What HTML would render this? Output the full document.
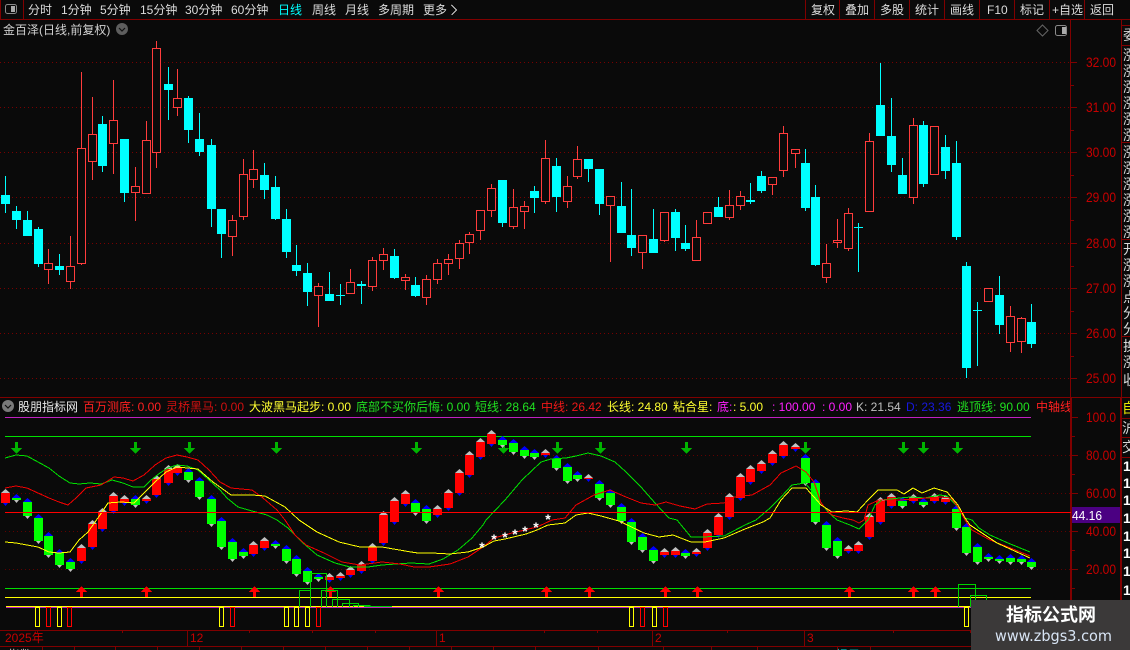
<!DOCTYPE html>
<html><head><meta charset="utf-8"><style>
html,body{margin:0;padding:0;background:#0a0a0a;width:1130px;height:650px;overflow:hidden}
svg{display:block}
text{font-family:"Liberation Sans","WenQuanYi Zen Hei","Noto Sans CJK SC",sans-serif;font-size:12px}
</style></head><body>
<svg width="1130" height="650" viewBox="0 0 1130 650" shape-rendering="crispEdges">
<rect width="1130" height="650" fill="#0a0a0a"/>
<!-- grid -->
<path d="M0 62.5H1070M0 107.5H1070M0 152.5H1070M0 197.5H1070M0 243.5H1070M0 288.5H1070M0 333.5H1070M0 378.5H1070" stroke="#780000" stroke-dasharray="1 3" fill="none"/>
<path d="M5 455.5H1070M5 493.5H1070M5 531.5H1070M5 569.5H1070" stroke="#600000" stroke-dasharray="1 3" fill="none"/>
<!-- cyan candles -->
<path stroke="#00ffff" fill="none" d="M5.5 176V213M16.5 206V229M27.5 211V236M38.5 227V267M59.5 254V275M102.5 116V172M124.5 139V202M168.5 67V120M188.5 96V143M199.5 113V156M211.5 139V227M221.5 209V258M264.5 163V199M275.5 176V220M286.5 209V258M296.5 245V276M307.5 263V306M329.5 272V301M340.5 284V305M361.5 281V304M394.5 249V279M415.5 277V297M502.5 180V227M534.5 186V213M556.5 158V212M588.5 159V182M599.5 169V215M621.5 182V233M631.5 189V256M653.5 209V253M675.5 209V251M685.5 225V251M718.5 197V217M750.5 183V204M761.5 171V193M805.5 149V211M815.5 185V266M858.5 223V272M880.5 63V136M891.5 98V172M902.5 158V194M923.5 121V187M945.5 135V179M956.5 141V240M966.5 262V378M977.5 302V366M999.5 276V334M1031.5 304V348"/>
<path fill="#00ffff" d="M1 195h9V204h-9zM12 211h9V220h-9zM23 220h9V236h-9zM34 229h9V264h-9zM55 266h9V270h-9zM98 124h9V166h-9zM120 139h9V193h-9zM164 84h9V90h-9zM184 98h9V130h-9zM195 139h9V152h-9zM207 145h9V209h-9zM217 209h9V234h-9zM260 175h9V190h-9zM271 187h9V219h-9zM282 219h9V252h-9zM292 265h9V271h-9zM303 273h9V292h-9zM325 294h9V301h-9zM336 295h9V296h-9zM357 284h9V286h-9zM390 256h9V278h-9zM411 285h9V296h-9zM498 180h9V223h-9zM530 191h9V198h-9zM552 166h9V197h-9zM584 159h9V169h-9zM595 169h9V204h-9zM617 206h9V233h-9zM627 235h9V248h-9zM649 239h9V253h-9zM671 212h9V238h-9zM681 243h9V249h-9zM714 207h9V217h-9zM746 200h9V202h-9zM757 176h9V191h-9zM801 163h9V208h-9zM811 197h9V265h-9zM854 227h9V228h-9zM876 105h9V136h-9zM887 136h9V165h-9zM898 175h9V194h-9zM919 125h9V184h-9zM941 147h9V171h-9zM952 163h9V237h-9zM962 266h9V368h-9zM973 310h9V311h-9zM995 295h9V325h-9zM1027 322h9V344h-9z"/>
<!-- red candles -->
<path stroke="#ff3c3c" fill="none" d="M48.5 249V263M48.5 270V284M70.5 236V266M70.5 282V289M81.5 72V148M81.5 264V265M92.5 97V134M92.5 162V180M113.5 80V120M113.5 144V174M135.5 167V186M135.5 193V221M146.5 121V140M156.5 41V48M156.5 153V168M177.5 69V98M177.5 108V116M232.5 215V220M232.5 237V256M243.5 159V174M243.5 217V220M253.5 150V169M253.5 180V188M318.5 283V286M318.5 296V327M350.5 269V282M372.5 257V260M372.5 287V291M383.5 248V254M383.5 261V270M405.5 274V277M405.5 281V290M426.5 275V279M426.5 298V305M437.5 259V263M437.5 280V284M448.5 254V259M448.5 264V275M459.5 240V243M459.5 259V269M469.5 232V234M469.5 243V254M480.5 231V240M491.5 184V188M491.5 211V217M513.5 189V207M513.5 227V229M524.5 201V206M524.5 212V229M545.5 140V158M545.5 202V204M567.5 176V186M567.5 202V208M577.5 146V159M577.5 177V179M610.5 206V262M642.5 253V269M664.5 241V242M696.5 220V237M729.5 190V205M729.5 218V220M740.5 191V196M740.5 206V210M772.5 185V195M783.5 126V133M783.5 171V177M795.5 154V168M826.5 244V263M826.5 278V283M837.5 219V240M837.5 243V248M848.5 208V213M848.5 249V251M869.5 133V141M913.5 118V125M913.5 198V204M1010.5 306V316M1010.5 343V352M1021.5 317V318M1021.5 342V353"/>
<path stroke="#ff3c3c" fill="#0a0a0a" d="M44.5 263.5h8V269.5h-8zM66.5 266.5h8V281.5h-8zM77.5 148.5h8V263.5h-8zM88.5 134.5h8V161.5h-8zM109.5 120.5h8V143.5h-8zM131.5 186.5h8V192.5h-8zM142.5 140.5h8V193.5h-8zM152.5 48.5h8V152.5h-8zM173.5 98.5h8V107.5h-8zM228.5 220.5h8V236.5h-8zM239.5 174.5h8V216.5h-8zM249.5 169.5h8V179.5h-8zM314.5 286.5h8V295.5h-8zM346.5 282.5h8V293.5h-8zM368.5 260.5h8V286.5h-8zM379.5 254.5h8V260.5h-8zM401.5 277.5h8V280.5h-8zM422.5 279.5h8V297.5h-8zM433.5 263.5h8V279.5h-8zM444.5 259.5h8V263.5h-8zM455.5 243.5h8V258.5h-8zM465.5 234.5h8V242.5h-8zM476.5 210.5h8V230.5h-8zM487.5 188.5h8V210.5h-8zM509.5 207.5h8V226.5h-8zM520.5 206.5h8V211.5h-8zM541.5 158.5h8V201.5h-8zM563.5 186.5h8V201.5h-8zM573.5 159.5h8V176.5h-8zM606.5 196.5h8V205.5h-8zM638.5 235.5h8V252.5h-8zM660.5 212.5h8V240.5h-8zM692.5 237.5h8V260.5h-8zM703.5 212.5h8V223.5h-8zM725.5 205.5h8V217.5h-8zM736.5 196.5h8V205.5h-8zM768.5 177.5h8V184.5h-8zM779.5 133.5h8V170.5h-8zM791.5 149.5h8V153.5h-8zM822.5 263.5h8V277.5h-8zM833.5 240.5h8V242.5h-8zM844.5 213.5h8V248.5h-8zM865.5 141.5h8V211.5h-8zM909.5 125.5h8V197.5h-8zM930.5 126.5h8V174.5h-8zM984.5 288.5h8V301.5h-8zM1006.5 316.5h8V342.5h-8zM1017.5 318.5h8V341.5h-8z"/>
<!-- frame -->
<path stroke="#800000" fill="none" d="M0.5 0V19M0 19.5H1130M23.5 0V19M805.5 0V19M839.5 0V19M874.5 0V19M909.5 0V19M944.5 0V19M979.5 0V19M1014.5 0V19M1049.5 0V19M1084.5 0V19M0 397.5H1130M0 630.5H1122M0 646.5H1122"/>
<rect x="1070" y="20" width="1" height="377" fill="#800000"/>
<rect x="1070" y="397" width="2" height="233" fill="#800000"/>
<rect x="1121" y="20" width="1" height="377" fill="#800000"/>
<rect x="1120" y="397" width="2" height="253" fill="#800000"/>
<path stroke="#800000" fill="none" d="M1071 62.5h6M1071 85.5h3M1071 107.5h6M1071 130.5h3M1071 152.5h6M1071 175.5h3M1071 197.5h6M1071 220.5h3M1071 243.5h6M1071 266.5h3M1071 288.5h6M1071 311.5h3M1071 333.5h6M1071 356.5h3M1071 378.5h6M1072 417.5h6M1072 436.5h3M1072 455.5h6M1072 474.5h3M1072 493.5h6M1072 512.5h3M1072 531.5h6M1072 550.5h3M1072 569.5h6M1072 588.5h3M1072 607.5h3M1122 25.5h8M1122 45.5h8M1122 142.5h8M1122 239.5h8M1122 336.5h8M1122 418.5h8M1122 437.5h8M1122 457.5h8M187.5 630V646M436.5 630V646M652.5 630V646M804.5 630V646M37.5 630v3M122.5 630v3M249.5 630v3M312.5 630v3M375.5 630v3M544.5 630v3M597.5 630v3M727.5 630v3M893.5 630v3M970.5 630v3M42.5 646v4M74.5 646v4M115.5 646v4M157.5 646v4M199.5 646v4M241.5 646v4M283.5 646v4M325.5 646v4M367.5 646v4M409.5 646v4M451.5 646v4M493.5 646v4M535.5 646v4M598.5 646v4M663.5 646v4M711.5 646v4M757.5 646v4M837.5 646v4M870.5 646v4"/>
<!-- toolbar -->
<g fill="#dcdcdc">
<text x="28" y="14">分时</text><text x="61" y="14">1分钟</text><text x="100" y="14">5分钟</text><text x="140" y="14">15分钟</text><text x="185" y="14">30分钟</text><text x="231" y="14">60分钟</text><text x="278" y="14" fill="#00ffff">日线</text><text x="312" y="14">周线</text><text x="345" y="14">月线</text><text x="378" y="14">多周期</text><text x="423" y="14">更多</text>
<text x="811" y="14">复权</text><text x="845" y="14">叠加</text><text x="880" y="14">多股</text><text x="915" y="14">统计</text><text x="950" y="14">画线</text><text x="987" y="14">F10</text><text x="1020" y="14">标记</text><text x="1052" y="14">+自选</text><text x="1090" y="14">返回</text>
<text x="3" y="34" fill="#d0d0d0">金百泽(日线,前复权)</text>
</g>
<path d="M451.5 5l5 5-5 5" stroke="#cccccc" fill="none"/>
<g shape-rendering="auto">
<rect x="5.5" y="4.5" width="11" height="9" rx="2" fill="none" stroke="#8a8a8a"/><rect x="11" y="6" width="4" height="6" fill="#aaaaaa"/>
<rect x="1055.5" y="25.5" width="11" height="10" rx="2" fill="none" stroke="#8a8a8a"/><rect x="1062" y="27" width="4" height="7" fill="#aaaaaa"/>
<path d="M1042.5 25l5.5 5.5-5.5 5.500-5.500-5.500z" fill="none" stroke="#666"/>
<circle cx="122" cy="29" r="6" fill="#5e5e5e"/><path d="M119 28l3 3 3-3" fill="none" stroke="#111" stroke-width="1.2"/>
<circle cx="8" cy="406" r="6" fill="#7a7a7a"/><path d="M5 405l3 3 3-3" fill="none" stroke="#111" stroke-width="1.2"/>
</g>
<!-- axis labels -->
<g fill="#c80000">
<text x="1086" y="67" textLength="30" lengthAdjust="spacingAndGlyphs" style="font-size:14px">32.00</text>
<text x="1086" y="112" textLength="30" lengthAdjust="spacingAndGlyphs" style="font-size:14px">31.00</text>
<text x="1086" y="157" textLength="30" lengthAdjust="spacingAndGlyphs" style="font-size:14px">30.00</text>
<text x="1086" y="202" textLength="30" lengthAdjust="spacingAndGlyphs" style="font-size:14px">29.00</text>
<text x="1086" y="248" textLength="30" lengthAdjust="spacingAndGlyphs" style="font-size:14px">28.00</text>
<text x="1086" y="293" textLength="30" lengthAdjust="spacingAndGlyphs" style="font-size:14px">27.00</text>
<text x="1086" y="338" textLength="30" lengthAdjust="spacingAndGlyphs" style="font-size:14px">26.00</text>
<text x="1086" y="383" textLength="30" lengthAdjust="spacingAndGlyphs" style="font-size:14px">25.00</text>
<text x="1086" y="422" textLength="30" lengthAdjust="spacingAndGlyphs" style="font-size:14px">100.0</text>
<text x="1086" y="460" textLength="30" lengthAdjust="spacingAndGlyphs" style="font-size:14px">80.00</text>
<text x="1086" y="498" textLength="30" lengthAdjust="spacingAndGlyphs" style="font-size:14px">60.00</text>
<text x="1086" y="536" textLength="30" lengthAdjust="spacingAndGlyphs" style="font-size:14px">40.00</text>
<text x="1086" y="574" textLength="30" lengthAdjust="spacingAndGlyphs" style="font-size:14px">20.00</text>
<text x="5" y="642">2025年</text><text x="190" y="642">12</text><text x="439" y="642">1</text><text x="655" y="642">2</text><text x="807" y="642">3</text>
</g>
<rect x="1072" y="507" width="48" height="16" fill="#4b0082"/>
<text x="1072" y="520" fill="#ffffff" textLength="30" lengthAdjust="spacingAndGlyphs" style="font-size:13px">44.16</text>
<!-- right clipped column -->
<g fill="#d8d8d8">
<text x="1123" y="40" style="font-size:14px">委</text>
<text x="1123 1123 1123 1123 1123 1123" y="60 76 92 108 124 140" style="font-size:14px">涨涨涨涨涨涨</text>
<text x="1123 1123 1123 1123 1123 1123" y="157 173 189 205 221 237" style="font-size:14px">涨涨涨涨涨涨</text>
<text x="1123 1123 1123 1123 1123 1123" y="254 270 286 302 318 334" style="font-size:14px">开涨涨点分分</text>
<text x="1123 1123 1123" y="351 367 385" style="font-size:14px">换涨收</text>
<text x="1122" y="413" fill="#e8e800" style="font-size:14px">自</text>
<text x="1122" y="433" style="font-size:14px">沪</text>
<text x="1122" y="452" style="font-size:14px">交</text>
</g>
<g fill="#ffffff" style="font-weight:bold">
<text x="1123" y="471" style="font-size:14px">1</text><text x="1123" y="488" style="font-size:14px">1</text><text x="1123" y="505" style="font-size:14px">1</text><text x="1123" y="523" style="font-size:14px">1</text><text x="1123" y="541" style="font-size:14px">1</text><text x="1123" y="558" style="font-size:14px">1</text><text x="1123" y="576" style="font-size:14px">1</text><text x="1123" y="595" style="font-size:14px">1</text>
</g>
<!-- legend -->
<text x="18" y="411" fill="#e8e8e8">股朋指标网</text>
<text x="83" y="411" fill="#ff2020">百万测底: 0.00</text>
<text x="166" y="411" fill="#d01010">灵桥黑马: 0.00</text>
<text x="249" y="411" fill="#ffff30">大波黑马起步: 0.00</text>
<text x="356" y="411" fill="#20e020">底部不买你后悔: 0.00</text>
<text x="475" y="411" fill="#20e020">短线: 28.64</text>
<text x="541" y="411" fill="#f01818">中线: 26.42</text>
<text x="607" y="411" fill="#ffff30">长线: 24.80</text>
<text x="673" y="411" fill="#ffff30">粘合星:</text>
<text x="717" y="411" fill="#ff20ff">底:</text>
<text x="733" y="411" fill="#ffff30">: 5.00</text>
<text x="772" y="411" fill="#ff20ff">: 100.00</text>
<text x="822" y="411" fill="#ff20ff">: 0.00</text>
<text x="856" y="411" fill="#c0c0c0">K: 21.54</text>
<text x="906" y="411" fill="#1818e0">D: 23.36</text>
<text x="957" y="411" fill="#20e020">逃顶线: 90.00</text>
<text x="1036" y="411" fill="#ff2020">中轴线</text>
<rect x="1070" y="400" width="2" height="17" fill="#800000"/><rect x="1072" y="400" width="12" height="17" fill="#0a0a0a"/>
<!-- horizontal levels -->
<path stroke="#c020c0" fill="none" d="M5 417.5H1031"/>
<path stroke="#00e000" fill="none" d="M5 436.5H1031"/>
<!-- green arrows -->
<path fill="#00b400" d="M15 442h3v6h4l-5.5 6-5.5-6h4zM134 442h3v6h4l-5.5 6-5.5-6h4zM188 442h3v6h4l-5.5 6-5.5-6h4zM275 442h3v6h4l-5.5 6-5.5-6h4zM415 442h3v6h4l-5.5 6-5.5-6h4zM502 442h3v6h4l-5.5 6-5.5-6h4zM556 442h3v6h4l-5.5 6-5.5-6h4zM599 442h3v6h4l-5.5 6-5.5-6h4zM685 442h3v6h4l-5.5 6-5.5-6h4zM804 442h3v6h4l-5.5 6-5.5-6h4zM902 442h3v6h4l-5.5 6-5.5-6h4zM922 442h3v6h4l-5.5 6-5.5-6h4zM956 442h3v6h4l-5.5 6-5.5-6h4z"/>
<!-- indicator candles: red -->
<path fill="#ff0000" d="M1 493h9V503h-9zM77 548h9V561h-9zM88 524h9V547h-9zM98 512h9V529h-9zM109 496h9V511h-9zM120 499h9V503h-9zM142 499h9V501h-9zM152 479h9V495h-9zM164 469h9V483h-9zM173 468h9V473h-9zM249 545h9V554h-9zM260 541h9V548h-9zM325 577h9V580h-9zM336 576h9V578h-9zM346 570h9V575h-9zM357 565h9V571h-9zM368 547h9V561h-9zM379 515h9V543h-9zM390 501h9V522h-9zM401 494h9V504h-9zM433 509h9V515h-9zM444 493h9V508h-9zM455 473h9V493h-9zM465 455h9V475h-9zM476 442h9V457h-9zM487 434h9V444h-9zM541 453h9V455h-9zM584 478h9V479h-9zM660 552h9V555h-9zM671 551h9V555h-9zM692 552h9V554h-9zM703 533h9V548h-9zM714 517h9V535h-9zM725 497h9V517h-9zM736 477h9V498h-9zM746 469h9V482h-9zM757 464h9V471h-9zM768 454h9V463h-9zM779 445h9V456h-9zM791 447h9V449h-9zM844 549h9V551h-9zM854 545h9V551h-9zM865 517h9V537h-9zM876 501h9V522h-9zM887 497h9V506h-9zM909 498h9V501h-9zM930 497h9V501h-9zM941 499h9V502h-9z"/>
<g shape-rendering="auto">
<path fill="#c0c0c0" d="M1 493l4.500-4 4.500 4zM77 548l4.500-4 4.500 4zM88 524l4.500-4 4.500 4zM98 512l4.500-4 4.500 4zM109 496l4.500-4 4.500 4zM120 499l4.500-4 4.500 4zM142 499l4.500-4 4.500 4zM152 479l4.500-4 4.500 4zM164 469l4.500-4 4.500 4zM173 468l4.500-4 4.500 4zM249 545l4.500-4 4.500 4zM260 541l4.500-4 4.500 4zM325 577l4.500-4 4.500 4zM336 576l4.500-4 4.500 4zM346 570l4.500-4 4.500 4zM357 565l4.500-4 4.500 4zM368 547l4.500-4 4.500 4zM379 515l4.500-4 4.500 4zM390 501l4.500-4 4.500 4zM401 494l4.500-4 4.500 4zM433 509l4.500-4 4.500 4zM444 493l4.500-4 4.500 4zM455 473l4.500-4 4.500 4zM465 455l4.500-4 4.500 4zM476 442l4.500-4 4.500 4zM487 434l4.500-4 4.500 4zM541 453l4.500-4 4.500 4zM584 478l4.500-4 4.500 4zM660 552l4.500-4 4.500 4zM671 551l4.500-4 4.500 4zM692 552l4.500-4 4.500 4zM703 533l4.500-4 4.500 4zM714 517l4.500-4 4.500 4zM725 497l4.500-4 4.500 4zM736 477l4.500-4 4.500 4zM746 469l4.500-4 4.500 4zM757 464l4.500-4 4.500 4zM768 454l4.500-4 4.500 4zM779 445l4.500-4 4.500 4zM791 447l4.500-4 4.500 4zM844 549l4.500-4 4.500 4zM854 545l4.500-4 4.500 4zM865 517l4.500-4 4.500 4zM876 501l4.500-4 4.500 4zM887 497l4.500-4 4.500 4zM909 498l4.500-4 4.500 4zM930 497l4.500-4 4.500 4zM941 499l4.500-4 4.500 4z"/>
<path fill="#0000ff" d="M3 503l2.500 3 2.500-3zM79 561l2.500 3 2.500-3zM90 547l2.500 3 2.500-3zM100 529l2.500 3 2.500-3zM111 511l2.500 3 2.500-3zM122 503l2.500 3 2.500-3zM144 501l2.500 3 2.500-3zM154 495l2.500 3 2.500-3zM166 483l2.500 3 2.500-3zM175 473l2.500 3 2.500-3zM251 554l2.500 3 2.500-3zM262 548l2.500 3 2.500-3zM327 580l2.500 3 2.500-3zM338 578l2.500 3 2.500-3zM348 575l2.500 3 2.500-3zM359 571l2.500 3 2.500-3zM370 561l2.500 3 2.500-3zM381 543l2.500 3 2.500-3zM392 522l2.500 3 2.500-3zM403 504l2.500 3 2.500-3zM435 515l2.500 3 2.500-3zM446 508l2.500 3 2.500-3zM457 493l2.500 3 2.500-3zM467 475l2.500 3 2.500-3zM478 457l2.500 3 2.500-3zM489 444l2.500 3 2.500-3zM543 455l2.500 3 2.500-3zM586 479l2.500 3 2.500-3zM662 555l2.500 3 2.500-3zM673 555l2.500 3 2.500-3zM694 554l2.500 3 2.500-3zM705 548l2.500 3 2.500-3zM716 535l2.500 3 2.500-3zM727 517l2.500 3 2.500-3zM738 498l2.500 3 2.500-3zM748 482l2.500 3 2.500-3zM759 471l2.500 3 2.500-3zM770 463l2.500 3 2.500-3zM781 456l2.500 3 2.500-3zM793 449l2.500 3 2.500-3zM846 551l2.500 3 2.500-3zM856 551l2.500 3 2.500-3zM867 537l2.500 3 2.500-3zM878 522l2.500 3 2.500-3zM889 506l2.500 3 2.500-3zM911 501l2.500 3 2.500-3zM932 501l2.500 3 2.500-3zM943 502l2.500 3 2.500-3z"/>
</g>
<!-- indicator candles: green -->
<path fill="#00ff00" d="M12 498h9V500h-9zM23 502h9V516h-9zM34 518h9V541h-9zM44 536h9V555h-9zM55 553h9V565h-9zM66 562h9V569h-9zM131 499h9V505h-9zM184 472h9V480h-9zM195 481h9V497h-9zM207 499h9V524h-9zM217 521h9V547h-9zM228 542h9V559h-9zM239 552h9V556h-9zM271 544h9V546h-9zM282 549h9V561h-9zM292 559h9V574h-9zM303 571h9V582h-9zM314 577h9V579h-9zM411 503h9V513h-9zM422 509h9V521h-9zM498 440h9V445h-9zM509 443h9V452h-9zM520 450h9V456h-9zM530 453h9V457h-9zM552 459h9V468h-9zM563 467h9V481h-9zM573 475h9V479h-9zM595 484h9V498h-9zM606 493h9V505h-9zM617 507h9V521h-9zM627 522h9V542h-9zM638 537h9V550h-9zM649 550h9V561h-9zM681 553h9V556h-9zM801 458h9V483h-9zM811 483h9V522h-9zM822 525h9V548h-9zM833 541h9V556h-9zM898 501h9V506h-9zM919 502h9V505h-9zM952 509h9V528h-9zM962 527h9V553h-9zM973 547h9V562h-9zM984 557h9V559h-9zM995 559h9V561h-9zM1006 558h9V562h-9zM1017 559h9V562h-9zM1027 562h9V567h-9z"/>
<g shape-rendering="auto">
<path fill="#0000ff" d="M12 498l4.500-4 4.500 4zM23 502l4.500-4 4.500 4zM34 518l4.500-4 4.500 4zM44 536l4.500-4 4.500 4zM55 553l4.500-4 4.500 4zM66 562l4.500-4 4.500 4zM131 499l4.500-4 4.500 4zM184 472l4.500-4 4.500 4zM195 481l4.500-4 4.500 4zM207 499l4.500-4 4.500 4zM217 521l4.500-4 4.500 4zM228 542l4.500-4 4.500 4zM239 552l4.500-4 4.500 4zM271 544l4.500-4 4.500 4zM282 549l4.500-4 4.500 4zM292 559l4.500-4 4.500 4zM303 571l4.500-4 4.500 4zM314 577l4.500-4 4.500 4zM411 503l4.500-4 4.500 4zM422 509l4.500-4 4.500 4zM498 440l4.500-4 4.500 4zM509 443l4.500-4 4.500 4zM520 450l4.500-4 4.500 4zM530 453l4.500-4 4.500 4zM552 459l4.500-4 4.500 4zM563 467l4.500-4 4.500 4zM573 475l4.500-4 4.500 4zM595 484l4.500-4 4.500 4zM606 493l4.500-4 4.500 4zM617 507l4.500-4 4.500 4zM627 522l4.500-4 4.500 4zM638 537l4.500-4 4.500 4zM649 550l4.500-4 4.500 4zM681 553l4.500-4 4.500 4zM801 458l4.500-4 4.500 4zM811 483l4.500-4 4.500 4zM822 525l4.500-4 4.500 4zM833 541l4.500-4 4.500 4zM898 501l4.500-4 4.500 4zM919 502l4.500-4 4.500 4zM952 509l4.500-4 4.500 4zM962 527l4.500-4 4.500 4zM973 547l4.500-4 4.500 4zM984 557l4.500-4 4.500 4zM995 559l4.500-4 4.500 4zM1006 558l4.500-4 4.500 4zM1017 559l4.500-4 4.500 4zM1027 562l4.500-4 4.500 4z"/>
<path fill="#c0c0c0" d="M14 500l2.500 3 2.500-3zM25 516l2.500 3 2.500-3zM36 541l2.500 3 2.500-3zM46 555l2.500 3 2.500-3zM57 565l2.500 3 2.500-3zM68 569l2.500 3 2.500-3zM133 505l2.500 3 2.500-3zM186 480l2.500 3 2.500-3zM197 497l2.500 3 2.500-3zM209 524l2.500 3 2.500-3zM219 547l2.500 3 2.500-3zM230 559l2.500 3 2.500-3zM241 556l2.500 3 2.500-3zM273 546l2.500 3 2.500-3zM284 561l2.500 3 2.500-3zM294 574l2.500 3 2.500-3zM305 582l2.500 3 2.500-3zM316 579l2.500 3 2.500-3zM413 513l2.500 3 2.500-3zM424 521l2.500 3 2.500-3zM500 445l2.500 3 2.500-3zM511 452l2.500 3 2.500-3zM522 456l2.500 3 2.500-3zM532 457l2.500 3 2.500-3zM554 468l2.500 3 2.500-3zM565 481l2.500 3 2.500-3zM575 479l2.500 3 2.500-3zM597 498l2.500 3 2.500-3zM608 505l2.500 3 2.500-3zM619 521l2.500 3 2.500-3zM629 542l2.500 3 2.500-3zM640 550l2.500 3 2.500-3zM651 561l2.500 3 2.500-3zM683 556l2.500 3 2.500-3zM803 483l2.500 3 2.500-3zM813 522l2.500 3 2.500-3zM824 548l2.500 3 2.500-3zM835 556l2.500 3 2.500-3zM900 506l2.500 3 2.500-3zM921 505l2.500 3 2.500-3zM954 528l2.500 3 2.500-3zM964 553l2.500 3 2.500-3zM975 562l2.500 3 2.500-3zM986 559l2.500 3 2.500-3zM997 561l2.500 3 2.500-3zM1008 562l2.500 3 2.500-3zM1019 562l2.500 3 2.500-3zM1029 567l2.500 3 2.500-3z"/>
</g>
<!-- curves -->
<polyline fill="none" stroke="#00e000" points="5,458 16,455 27,456 38,462 49,468 59,476 70,483 79,484 90,483 101,484 112,480 123,483 133,487 144,487 151,480 160,473 168,468 177,465 187,466 198,470 209,480 220,490 227,498 238,507 252,511 267,515 277,520 288,528 303,543 317,555 335,563 350,567 368,567 382,565 396,564 411,563 429,564 443,559 458,550 472,538 483,525 486,520 505,500 522,480 541,462 551,459 566,458 576,456 588,453 601,456 615,462 626,472 641,487 655,503 669,518 677,520 691,537 702,537 724,536 745,525 756,520 770,508 781,497 792,485 805,483 817,497 828,512 837,520 850,525 859,529 868,520 875,505 882,500 900,498 911,497 925,498 940,495 947,496 956,505 965,518 972,520 979,528 990,535 1008,543 1030,552"/>
<polyline fill="none" stroke="#f00000" points="5,488 16,486 27,488 38,493 49,498 59,502 68,505 76,498 86,488 101,485 114,477 123,478 133,481 144,475 155,465 166,458 177,455 187,457 198,460 209,470 220,482 231,488 252,490 263,498 277,510 285,520 295,535 306,545 324,553 342,562 360,565 382,562 400,564 414,567 429,567 450,564 468,557 483,547 494,538 512,533 537,527 552,520 565,518 576,505 594,495 610,490 626,497 641,503 655,505 666,502 680,506 695,509 707,504 724,503 734,497 752,495 770,485 781,473 796,466 806,472 814,482 821,503 832,515 843,518 853,520 859,523 864,520 868,505 879,500 900,500 940,497 951,498 958,507 965,520 972,530 990,540 1008,547 1030,556"/>
<polyline fill="none" stroke="#ffff00" points="5,542 16,543 27,545 38,547 49,552 59,553 70,552 79,540 88,532 100,515 108,503 121,502 134,503 144,493 155,482 166,472 177,467 198,469 213,482 231,495 252,495 265,496 285,507 299,520 317,532 339,542 360,547 382,547 411,552 418,553 432,553 450,554 468,552 483,547 494,541 505,539 526,534 537,530 548,525 565,523 576,515 588,513 601,516 619,521 644,533 659,537 673,535 691,542 705,542 724,538 745,529 763,522 770,518 781,500 792,488 806,488 821,505 832,512 846,511 857,512 868,500 878,490 897,490 904,494 913,488 922,493 934,488 947,492 958,505 965,518 970,525 997,543 1008,548 1030,558"/>
<path stroke="#ff0000" fill="none" d="M5 512.500H1071"/>
<!-- stars -->
<g fill="#ffffff" style="font-weight:bold" text-anchor="middle">
<text x="482" y="552" style="font-size:14px">*</text><text x="494" y="544" style="font-size:14px">*</text><text x="505" y="542" style="font-size:14px">*</text><text x="515" y="539" style="font-size:14px">*</text><text x="525" y="536" style="font-size:14px">*</text><text x="536" y="532" style="font-size:14px">*</text><text x="548" y="524" style="font-size:14px">*</text>
</g>
<!-- low levels -->
<path stroke="#00e000" fill="none" d="M5 588.500H1031"/>
<path stroke="#ffff00" fill="none" d="M5 597.500H1031"/>
<path stroke="#ffff00" fill="none" d="M6 606.500H1031"/>
<path stroke="#c020c0" fill="none" d="M6 607.500H1031"/>
<!-- red up arrows -->
<path fill="#ff0000" d="M81.500 586l5.500 6h-4v5h-3v-5h-4zM146.500 586l5.500 6h-4v5h-3v-5h-4zM254.500 586l5.500 6h-4v5h-3v-5h-4zM330.500 586l5.500 6h-4v5h-3v-5h-4zM438.500 586l5.500 6h-4v5h-3v-5h-4zM546.500 586l5.500 6h-4v5h-3v-5h-4zM589.500 586l5.500 6h-4v5h-3v-5h-4zM665.500 586l5.500 6h-4v5h-3v-5h-4zM697.500 586l5.500 6h-4v5h-3v-5h-4zM849.500 586l5.500 6h-4v5h-3v-5h-4zM913.500 586l5.500 6h-4v5h-3v-5h-4zM935.500 586l5.500 6h-4v5h-3v-5h-4z"/>
<!-- bottom hollow bars -->
<path stroke="#ffff00" fill="none" d="M35.500 607.500h4V626.500h-4zM57.500 607.500h4V626.500h-4zM219.500 607.500h4V626.500h-4zM284.500 607.500h4V626.500h-4zM294.500 607.500h4V626.500h-4zM305.500 607.500h4V626.500h-4zM629.500 607.500h4V626.500h-4zM652.500 607.500h4V626.500h-4zM964.500 607.500h4V626.500h-4z"/>
<path stroke="#ff0000" fill="none" d="M46.500 607.500h4V626.500h-4zM67.500 607.500h4V626.500h-4zM230.500 607.500h4V626.500h-4zM316.500 607.500h4V626.500h-4zM640.500 607.500h4V626.500h-4zM663.500 607.500h4V626.500h-4z"/>
<!-- stair steps -->
<path stroke="#00d000" fill="none" d="M299.500 607V590.500H310.500V607M310.500 590V573.500H326.500V607M321.500 607V590.500H337.500V607M332.500 607V599.500H349.500V607M342.500 607V603.500H358.500V607M353.500 607V605.500H370V607M364 606.500H392M958.500 607V584.500H975.500V607M970.500 607V595.500H986.500V607"/>
<!-- bottom clipped text -->
<text x="8" y="659" fill="#cccccc">指数</text>
<text x="836" y="659" fill="#00cccc">提示</text>
<!-- watermark -->
<rect x="971" y="600" width="159" height="50" fill="#3b3939"/>
<text x="1051" y="621" text-anchor="middle" fill="#ffffff" style="font-size:18px;font-weight:bold;font-family:'Noto Sans CJK SC',sans-serif">指标公式网</text>
<text x="995" y="641" fill="#d8e4f4" textLength="117" lengthAdjust="spacingAndGlyphs" style="font-size:15px;font-family:'DejaVu Sans',sans-serif">www.zbgs3.com</text>
</svg>
</body></html>
